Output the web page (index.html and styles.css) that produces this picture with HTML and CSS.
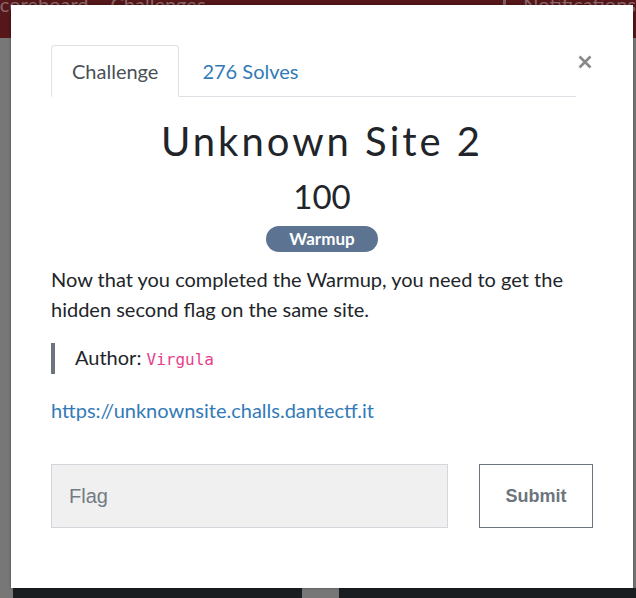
FILE: index.html
```html
<!DOCTYPE html>
<html lang="en">
<head>
<meta charset="utf-8">
<title>Unknown Site 2</title>
<link rel="stylesheet" href="styles.css">
</head>
<body>
<header class="navbar">
  <nav class="nav-left">
    <span class="nav-item first">Scoreboard</span>
    <span class="nav-item">Challenges</span>
  </nav>
  <nav class="nav-right">
    <span class="nav-icon"></span>
    <span class="nav-item">Notifications</span>
  </nav>
</header>
<main class="page">
  <div class="cards">
    <div class="card"></div>
    <div class="card"></div>
  </div>
</main>

<div class="modal">
  <div class="modal-header">
    <ul class="tabs">
      <li class="tab active">Challenge</li>
      <li class="tab link">276 Solves</li>
    </ul>
    <button class="close" aria-label="Close">
      <svg width="14" height="14" viewBox="0 0 14 14"><path d="M1.5 1.5 L12.5 12.5 M12.5 1.5 L1.5 12.5" stroke="#888" stroke-width="2.6" stroke-linecap="butt"/></svg>
    </button>
  </div>
  <div class="modal-body">
    <h1 class="title">Unknown Site 2</h1>
    <h2 class="value">100</h2>
    <div class="tag-row"><span class="badge">Warmup</span></div>
    <p class="desc">Now that you completed the Warmup, you need to get the hidden second flag on the same site.</p>
    <blockquote class="quote">Author: <code class="code">Virgula</code></blockquote>
    <p class="url"><a href="#">https://unknownsite.challs.dantectf.it</a></p>
    <form class="submit-row">
      <input class="flag-input" type="text" placeholder="Flag">
      <button class="submit-btn" type="button">Submit</button>
    </form>
  </div>
</div>
</body>
</html>
```
FILE: styles.css
```css
* { box-sizing: border-box; }
html, body { margin: 0; padding: 0; }
body {
  width: 636px;
  height: 598px;
  overflow: hidden;
  background: #777777;
  font-family: "Lato", "Liberation Sans", sans-serif;
  position: relative;
}
.navbar {
  height: 38px;
  background: #55171a;
  display: flex;
  justify-content: space-between;
  overflow: hidden;
}
.nav-left, .nav-right {
  display: flex;
  align-items: flex-start;
}
.nav-item {
  font-size: 20px;
  line-height: 20px;
  color: #8d6769;
  margin-top: -6px;
  white-space: nowrap;
}
.nav-left .first { margin-left: -11px; margin-right: 22px; }
.nav-right { width: 133px; }
.nav-icon {
  width: 8px;
  height: 5px;
  background: #7d6163;
  margin-right: 17px;
}
.page {
  height: 560px;
  display: flex;
  flex-direction: column;
  justify-content: flex-end;
}
.cards {
  display: flex;
  gap: 37px;
  padding-left: 13px;
  height: 10px;
}
.card {
  width: 291px;
  background: #1b1e21;
}
.card + .card { width: 300px; }

.modal {
  position: absolute;
  left: 11px;
  top: 5px;
  width: 622px;
  height: 583px;
  background: #fff;
  box-shadow: 0 0 3px rgba(0,0,0,0.35);
  padding: 40px 40px 0 40px;
  color: #212529;
}
.modal-header {
  display: flex;
  align-items: flex-start;
}
.tabs {
  flex: 1;
  display: flex;
  list-style: none;
  margin: 0;
  padding: 0;
  border-bottom: 1px solid #dee2e6;
  height: 52px;
}
.tab {
  font-size: 20px;
  line-height: 24px;
  padding: 13px 20px 14px 20px;
  margin-bottom: -1px;
  border: 1px solid transparent;
  border-radius: 4px 4px 0 0;
}
.tab.active {
  color: #495057;
  background: #fff;
  border-color: #dee2e6 #dee2e6 #fff;
}
.tab.link { color: #337ab7; padding-left: 22px; }
.close {
  border: 0;
  background: none;
  padding: 0;
  margin: 10px 1px 0 2px;
  width: 14px;
  height: 14px;
  display: flex;
}
.modal-body {
  display: flex;
  flex-direction: column;
}
.title {
  margin: 20px 0 0 0;
  text-align: center;
  font-weight: 400;
  font-size: 40px;
  line-height: 48px;
  letter-spacing: 3px;
  color: #212529;
}
.value {
  margin: 11px 0 0 0;
  text-align: center;
  font-weight: 400;
  font-size: 33px;
  line-height: 40px;
}
.tag-row {
  display: flex;
  justify-content: center;
  margin-top: 10px;
}
.badge {
  background: #5c7391;
  color: #fff;
  font-weight: 700;
  font-size: 17px;
  line-height: 26px;
  height: 26px;
  padding: 0 23px;
  border-radius: 13px;
}
.desc {
  margin: 12px 0 0 0;
  font-size: 20px;
  line-height: 30px;
}
.quote {
  margin: 19px 0 0 0;
  border-left: 4px solid #6c757d;
  padding-left: 20px;
  font-size: 20px;
  line-height: 29px;
}
.code {
  font-family: "DejaVu Sans Mono", "Liberation Mono", monospace;
  font-size: 16px;
  color: #e83e8c;
}
.url {
  margin: 23px 0 0 0;
  font-size: 20px;
  line-height: 27px;
}
.url a { color: #337ab7; text-decoration: none; }
.submit-row {
  display: flex;
  gap: 31px;
  margin: 40px 0 0 0;
}
.flag-input {
  width: 398px;
  height: 64px;
  background: #f0f0f0;
  border: 1px solid #d3d7db;
  border-radius: 0;
  padding: 0 17px;
  font-family: "Liberation Sans", Arial, sans-serif;
  font-size: 20px;
  color: #495057;
  outline: none;
}
.flag-input::placeholder { color: #737b83; }
.submit-btn {
  width: 114px;
  height: 64px;
  background: #fff;
  border: 1px solid #6c757d;
  border-radius: 0;
  font-family: "Liberation Sans", Arial, sans-serif;
  font-weight: 700;
  font-size: 18px;
  color: #6c757d;
}
```
